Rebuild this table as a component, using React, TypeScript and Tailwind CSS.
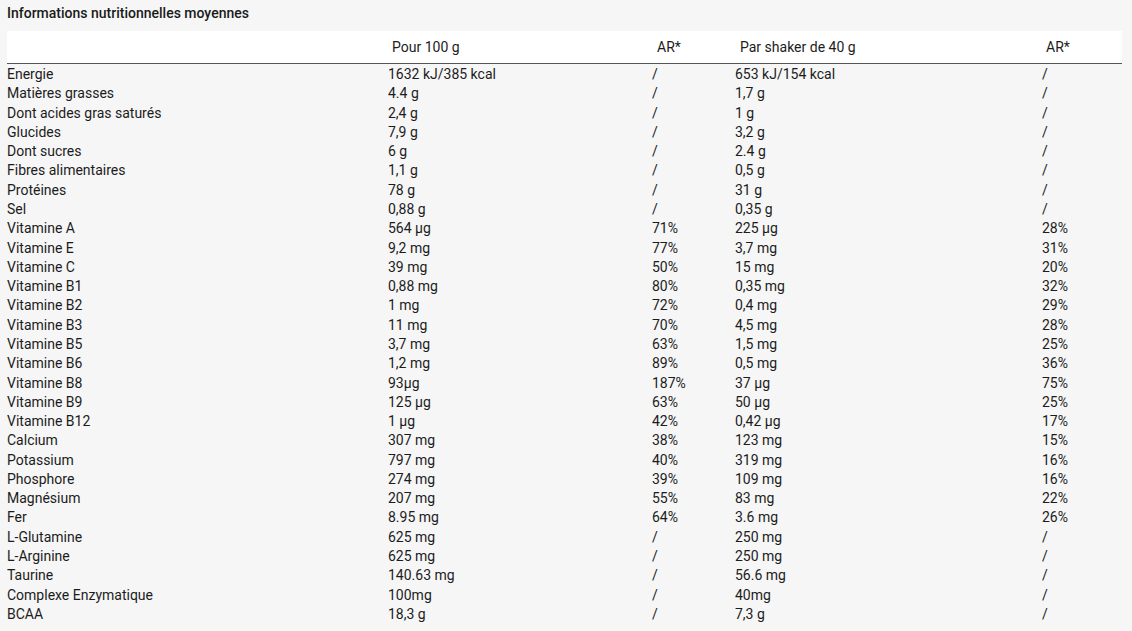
import React from "react";

const rows: [string, string, string, string, string][] = [
  ["Energie", "1632 kJ/385 kcal", "/", "653 kJ/154 kcal", "/"],
  ["Matières grasses", "4.4 g", "/", "1,7 g", "/"],
  ["Dont acides gras saturés", "2,4 g", "/", "1 g", "/"],
  ["Glucides", "7,9 g", "/", "3,2 g", "/"],
  ["Dont sucres", "6 g", "/", "2.4 g", "/"],
  ["Fibres alimentaires", "1,1 g", "/", "0,5 g", "/"],
  ["Protéines", "78 g", "/", "31 g", "/"],
  ["Sel", "0,88 g", "/", "0,35 g", "/"],
  ["Vitamine A", "564 µg", "71%", "225 µg", "28%"],
  ["Vitamine E", "9,2 mg", "77%", "3,7 mg", "31%"],
  ["Vitamine C", "39 mg", "50%", "15 mg", "20%"],
  ["Vitamine B1", "0,88 mg", "80%", "0,35 mg", "32%"],
  ["Vitamine B2", "1 mg", "72%", "0,4 mg", "29%"],
  ["Vitamine B3", "11 mg", "70%", "4,5 mg", "28%"],
  ["Vitamine B5", "3,7 mg", "63%", "1,5 mg", "25%"],
  ["Vitamine B6", "1,2 mg", "89%", "0,5 mg", "36%"],
  ["Vitamine B8", "93µg", "187%", "37 µg", "75%"],
  ["Vitamine B9", "125 µg", "63%", "50 µg", "25%"],
  ["Vitamine B12", "1 µg", "42%", "0,42 µg", "17%"],
  ["Calcium", "307 mg", "38%", "123 mg", "15%"],
  ["Potassium", "797 mg", "40%", "319 mg", "16%"],
  ["Phosphore", "274 mg", "39%", "109 mg", "16%"],
  ["Magnésium", "207 mg", "55%", "83 mg", "22%"],
  ["Fer", "8.95 mg", "64%", "3.6 mg", "26%"],
  ["L-Glutamine", "625 mg", "/", "250 mg", "/"],
  ["L-Arginine", "625 mg", "/", "250 mg", "/"],
  ["Taurine", "140.63 mg", "/", "56.6 mg", "/"],
  ["Complexe Enzymatique", "100mg", "/", "40mg", "/"],
  ["BCAA", "18,3 g", "/", "7,3 g", "/"],
];

const cols = "grid grid-cols-[381px_264px_83px_307px_79px]";

export default function App() {
  return (
    <div
      className="min-h-[631px] w-[1132px] bg-[#f6f6f6] pl-[7px] pr-[10px] pt-[5px] text-[14px] text-[#1c1c1c]"
      style={{ fontFamily: "Roboto, 'Noto Sans', sans-serif" }}
    >
      <div className="h-[16px] leading-[16px] font-medium text-[#1a1a1a]">
        Informations nutritionnelles moyennes
      </div>
      <div className="mt-[10px] w-[1115px]">
        <div className={`${cols} h-[33px] items-center bg-white border-b border-[#555555]`}>
          <div />
          <div className="pl-[4px]">Pour 100 g</div>
          <div className="pl-[5px]">AR*</div>
          <div className="pl-[5px]">Par shaker de 40 g</div>
          <div className="pl-[4px]">AR*</div>
        </div>
        <div className="pt-[1px]">
          {rows.map((r, i) => (
            <div key={i} className={`${cols} h-[19.29px] leading-[19.29px]`}>
              {r.map((c, j) => (
                <div key={j} className="whitespace-nowrap">
                  {c}
                </div>
              ))}
            </div>
          ))}
        </div>
      </div>
    </div>
  );
}
